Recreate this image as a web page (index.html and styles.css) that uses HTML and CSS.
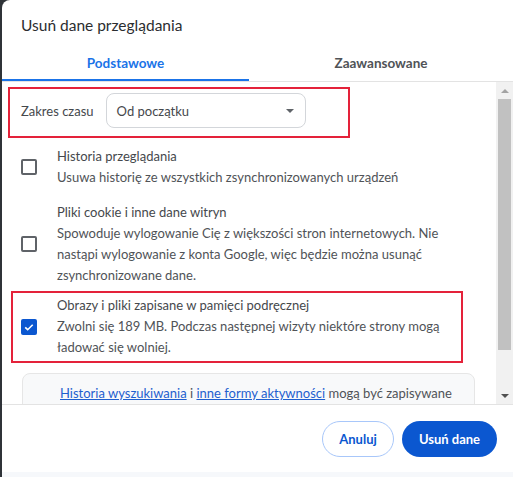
FILE: index.html
```html
<!DOCTYPE html>
<html lang="pl">
<head>
<meta charset="utf-8">
<title>Usuń dane przeglądania</title>
<link rel="stylesheet" href="styles.css">
</head>
<body>
<div class="dialog">
  <div class="header">Usuń dane przeglądania</div>
  <div class="tabs">
    <div class="tab active">Podstawowe</div>
    <div class="tab">Zaawansowane</div>
  </div>
  <div class="body">
    <div class="content">
      <div class="mark mark-range">
        <span class="range-label">Zakres czasu</span>
        <div class="select">
          <span>Od początku</span>
          <span class="caret"></span>
        </div>
      </div>
      <div class="item item-history">
        <span class="checkbox"></span>
        <div class="text">
          <div class="label">Historia przeglądania</div>
          <div class="desc">Usuwa historię ze wszystkich zsynchronizowanych urządzeń</div>
        </div>
      </div>
      <div class="item item-cookies">
        <span class="checkbox"></span>
        <div class="text">
          <div class="label">Pliki cookie i inne dane witryn</div>
          <div class="desc">Spowoduje wylogowanie Cię z większości stron internetowych. Nie<br>nastąpi wylogowanie z konta Google, więc będzie można usunąć<br>zsynchronizowane dane.</div>
        </div>
      </div>
      <div class="mark mark-cache">
        <div class="item item-cache">
          <span class="checkbox checked">
            <svg viewBox="0 0 16 16" width="16" height="16"><path d="M4.2 8.3l2.5 2.4 5-5" fill="none" stroke="#fff" stroke-width="1.6"/></svg>
          </span>
          <div class="text">
            <div class="label">Obrazy i pliki zapisane w pamięci podręcznej</div>
            <div class="desc">Zwolni się 189 MB. Podczas następnej wizyty niektóre strony mogą<br>ładować się wolniej.</div>
          </div>
        </div>
      </div>
      <div class="notice">
        <a href="#">Historia wyszukiwania</a> i <a href="#">inne formy aktywności</a> mogą być zapisywane
      </div>
    </div>
    <div class="scrollbar">
      <span class="arrow up"></span>
      <span class="thumb"></span>
      <span class="arrow down"></span>
    </div>
  </div>
  <div class="footer">
    <button class="btn btn-outline">Anuluj</button>
    <button class="btn btn-primary">Usuń dane</button>
  </div>
  <div class="strip"></div>
</div>
</body>
</html>
```
FILE: styles.css
```css
* { box-sizing: border-box; }
html, body { margin: 0; padding: 0; }
body {
  background: #2f3338;
  width: 513px;
  height: 477px;
  overflow: hidden;
  font-family: "Lato", "DejaVu Sans", sans-serif;
  font-size: 13px;
  color: #45484c;
}
.dialog {
  margin-left: 2px;
  height: 477px;
  background: #fff;
  border-top-left-radius: 8px;
  display: flex;
  flex-direction: column;
}
.header {
  height: 44px;
  padding: 14px 0 0 19px;
  font-size: 15.5px;
  line-height: 22px;
  color: #2b2d30;
}
.tabs {
  display: grid;
  grid-template-columns: 247px 1fr;
  height: 38px;
  border-bottom: 1px solid #e3e3e3;
}
.tab {
  display: flex;
  align-items: center;
  justify-content: center;
  font-weight: 700;
  font-size: 13.5px;
  color: #505357;
}
.tab.active {
  color: #1a73e8;
  box-shadow: inset 0 -2px 0 #1a73e8;
}
.body {
  display: flex;
  height: 322px;
}
.content {
  flex: 1;
  overflow: hidden;
  padding-top: 5px;
}
.mark { border: 2px solid #e4223a; }
.mark-range {
  margin-left: 6px;
  width: 342px;
  height: 51px;
  display: flex;
  align-items: center;
  padding: 0 0 4px 11px;
  gap: 12px;
}
.select {
  width: 200px;
  height: 35px;
  border: 1px solid #d3d6da;
  border-radius: 8px;
  display: flex;
  align-items: center;
  justify-content: space-between;
  padding: 0 11px 0 10px;
}
.caret {
  width: 0;
  height: 0;
  border-left: 4px solid transparent;
  border-right: 4px solid transparent;
  border-top: 4px solid #5f6368;
}
.item {
  display: flex;
  align-items: center;
  gap: 20px;
  padding-left: 19px;
  line-height: 21px;
}
.item-history { margin-top: 8px; }
.item-cookies { margin-top: 14px; }
.checkbox {
  flex: none;
  width: 16px;
  height: 16px;
  border: 2px solid #5f6368;
  border-radius: 2px;
}
.checkbox.checked {
  border: none;
  background: #0b57d0;
  display: flex;
}
.label { color: #45484c; }
.desc { color: #505357; }
.mark-cache {
  margin: 5px 0 0 9px;
  width: 452px;
  padding: 2px 0 3px;
}
.item-cache { padding-left: 8px; }
.notice {
  margin: 10px 0 0 20px;
  width: 453px;
  border: 1px solid #e6e6e6;
  border-radius: 8px;
  background: #f8f9fa;
  padding: 9px 20px 20px 37px;
  line-height: 21px;
  color: #505357;
  white-space: nowrap;
}
.notice a { color: #1f5fcf; }
.scrollbar {
  flex: none;
  width: 17px;
  background: #f1f1f1;
  display: flex;
  flex-direction: column;
  align-items: center;
}
.arrow {
  width: 17px;
  height: 17px;
  display: flex;
  align-items: center;
  justify-content: center;
}
.arrow::before {
  content: "";
  border-left: 4px solid transparent;
  border-right: 4px solid transparent;
}
.arrow.up::before { border-bottom: 4px solid #a3a3a3; }
.arrow.down::before { border-top: 4px solid #505050; }
.thumb {
  width: 13px;
  height: 251px;
  background: #c1c1c1;
}
.scrollbar .arrow.down { margin-top: auto; }
.footer {
  height: 68px;
  border-top: 1px solid #e3e3e3;
  display: flex;
  justify-content: flex-end;
  align-items: flex-start;
  gap: 8px;
  padding: 16px 16px 0 0;
}
.btn {
  height: 36px;
  border-radius: 18px;
  font-family: inherit;
  font-size: 13px;
  font-weight: 700;
  padding: 0;
  cursor: pointer;
}
.btn-outline {
  width: 72px;
  background: #fff;
  border: 1px solid #a8c7fa;
  color: #0b57d0;
}
.btn-primary {
  width: 95px;
  background: #0b57d0;
  border: none;
  color: #fff;
}
.strip {
  flex: 1;
  background: #f6f8fb;
}
```
